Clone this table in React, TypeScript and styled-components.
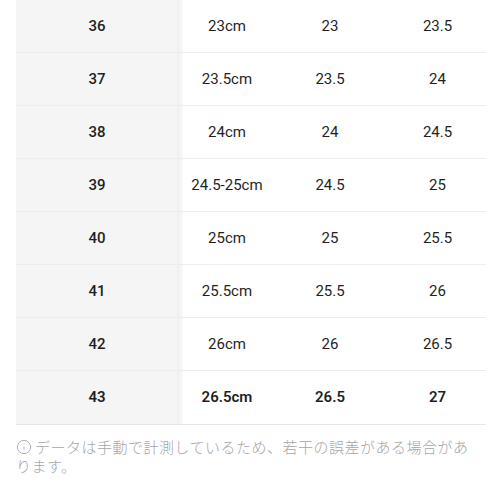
import styled, { createGlobalStyle } from "styled-components";
import { Info } from "lucide-react";

const GlobalStyle = createGlobalStyle`
  html, body {
    margin: 0;
    padding: 0;
    background: #ffffff;
  }
  body {
    font-family: Roboto, "Noto Sans", "Noto Sans CJK JP", sans-serif;
  }
`;

const Page = styled.div`
  width: 486px;
  height: 486px;
  overflow: hidden;
  padding-left: 16px;
  box-sizing: border-box;
`;

const Table = styled.div`
  display: grid;
  grid-template-columns: 167px 88px 118px 97px;
  border-bottom: 1px solid #e6e6e6;
`;

const Row = styled.div`
  display: contents;
`;

const SizeCell = styled.div<{ $strong?: boolean }>`
  height: 53px;
  box-sizing: border-box;
  display: flex;
  align-items: center;
  justify-content: center;
  padding-right: 5px;
  background: #f5f5f5;
  font-size: 15px;
  font-weight: ${({ $strong }) => ($strong ? 600 : 500)};
  color: #1f1f1f;
  position: relative;
  border-bottom: 1px solid ${({ $strong }) => ($strong ? "transparent" : "#ededed")};

  &::after {
    content: "";
    position: absolute;
    top: 0;
    right: 0;
    width: 6px;
    height: 100%;
    background: linear-gradient(
      to right,
      #f5f5f5 0,
      #e9e9e9 1px,
      #f9f9f9 2px,
      #eeeeee 3px,
      #fbfbfb 4px,
      #f3f3f3 5px,
      #ffffff 6px
    );
  }
`;

const Cell = styled.div<{ $strong?: boolean }>`
  height: 53px;
  box-sizing: border-box;
  display: flex;
  align-items: center;
  justify-content: center;
  font-size: 15px;
  font-weight: ${({ $strong }) => ($strong ? 600 : 400)};
  color: #1f1f1f;
  border-bottom: 1px solid ${({ $strong }) => ($strong ? "transparent" : "#ededed")};
`;

const Note = styled.p`
  margin: 0;
  padding: 12px 10px 0 0;
  font-family: "Noto Sans CJK JP", "Noto Sans", sans-serif;
  font-size: 15px;
  letter-spacing: 0.5px;
  line-height: 19px;
  font-weight: 300;
  color: #a6a6a6;
`;

const NoteIcon = styled(Info)`
  width: 16px;
  height: 16px;
  vertical-align: -2px;
  margin-right: 3px;
`;

const rows = [
  ["36", "23cm", "23", "23.5"],
  ["37", "23.5cm", "23.5", "24"],
  ["38", "24cm", "24", "24.5"],
  ["39", "24.5-25cm", "24.5", "25"],
  ["40", "25cm", "25", "25.5"],
  ["41", "25.5cm", "25.5", "26"],
  ["42", "26cm", "26", "26.5"],
  ["43", "26.5cm", "26.5", "27"],
];

const App = () => {
  return (
    <>
      <GlobalStyle />
      <Page>
        <Table>
          {rows.map((r, i) => {
            const last = i === rows.length - 1;
            return (
              <Row key={r[0]}>
                <SizeCell $strong={last}>{r[0]}</SizeCell>
                <Cell $strong={last}>{r[1]}</Cell>
                <Cell $strong={last}>{r[2]}</Cell>
                <Cell $strong={last}>{r[3]}</Cell>
              </Row>
            );
          })}
        </Table>
        <Note>
          <NoteIcon strokeWidth={1.3} />
          データは手動で計測しているため、若干の誤差がある場合があります。
        </Note>
      </Page>
    </>
  );
};

export default App;
